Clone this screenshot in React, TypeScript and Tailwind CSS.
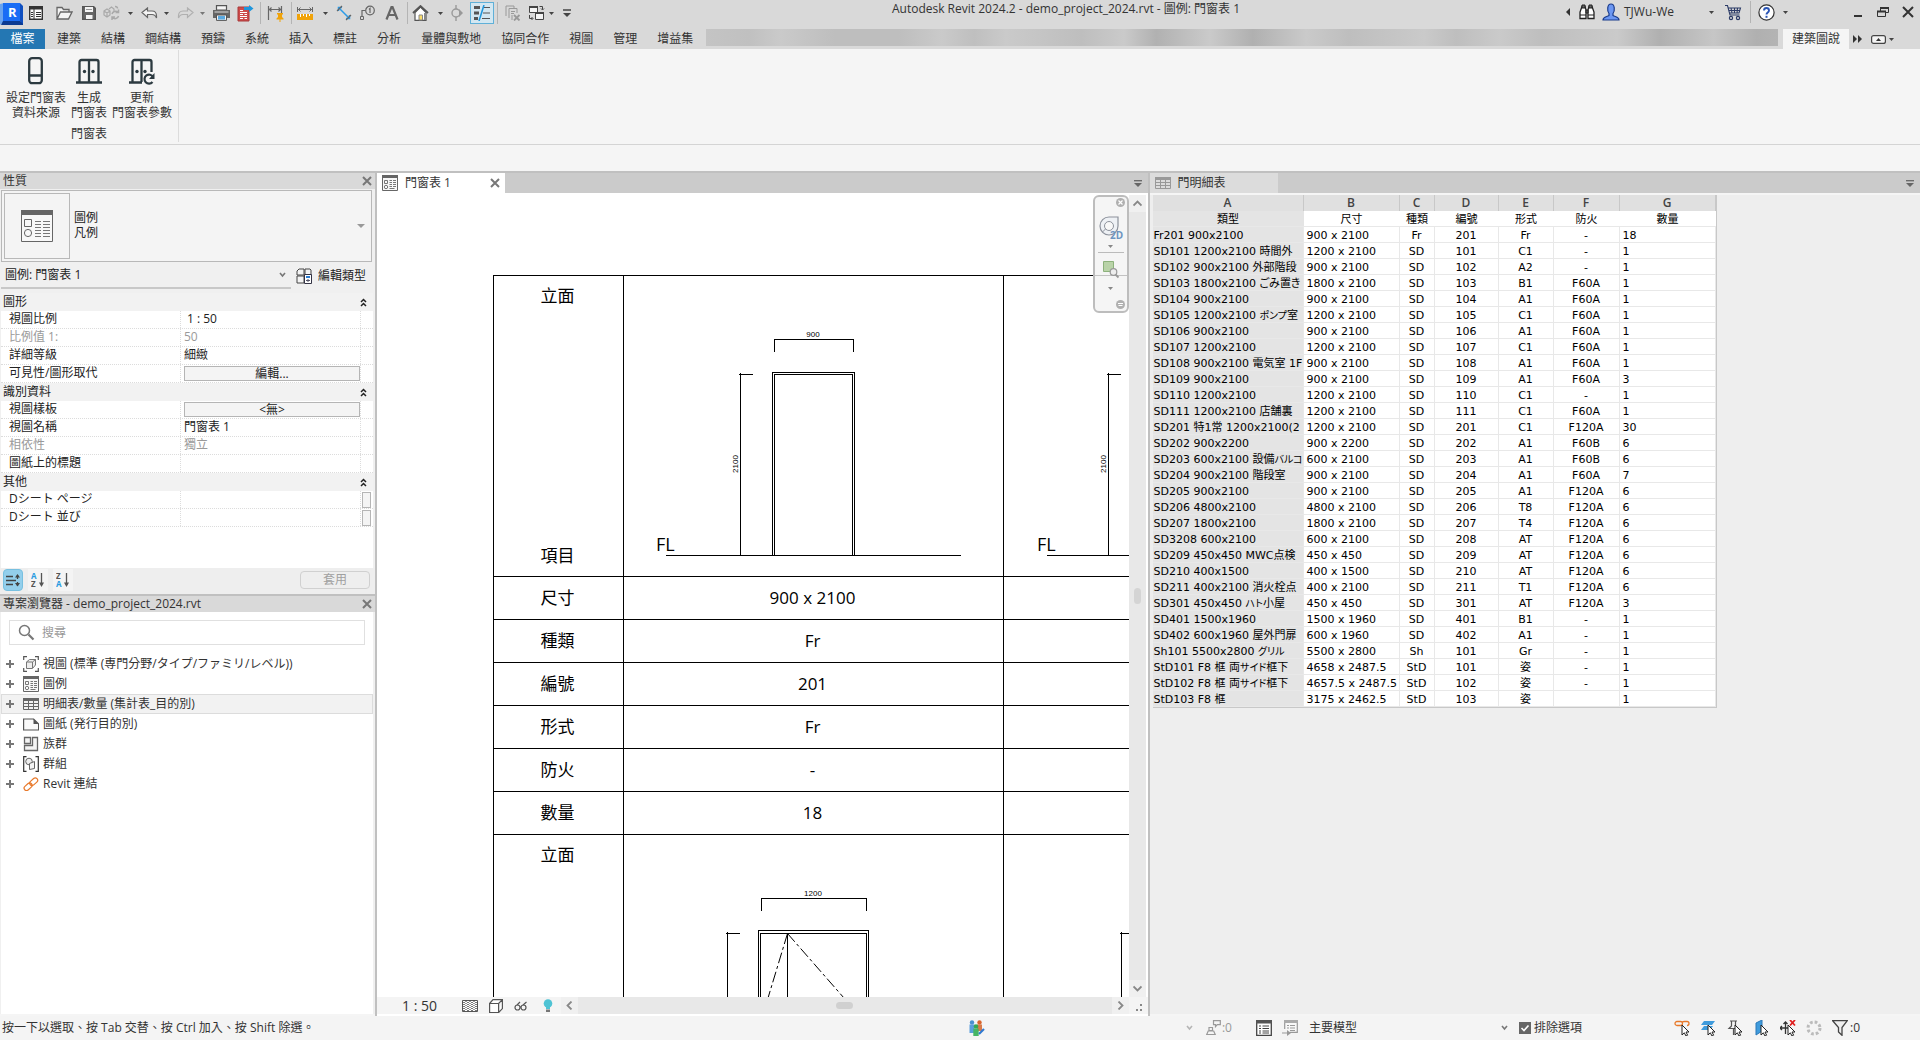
import React from "react";

type IconProps = { w?: number; h?: number; box?: string; className?: string; children: React.ReactNode };

const Icon = ({ w = 20, h = 20, box, className = "", children }: IconProps) => (
  <svg width={w} height={h} viewBox={box ?? `0 0 ${w} ${h}`} fill="none" className={`shrink-0 ${className}`} aria-hidden="true">
    {children}
  </svg>
);

const Caret = ({ className = "", label = "更多", tone = "text-[#444]" }: { className?: string; label?: string; tone?: string }) => (
  <button aria-label={label} className={`flex h-5 w-[10px] shrink-0 items-center justify-center ${tone} ${className}`}>
    <Icon w={5} h={3}><path d="M0 0h5L2.5 3z" fill="currentColor" /></Icon>
  </button>
);

const Tool = ({ label, className = "", children }: { label: string; className?: string; children: React.ReactNode }) => (
  <button aria-label={label} className={`flex h-[22px] w-5 shrink-0 items-center justify-center ${className}`}>{children}</button>
);

const Separator = ({ className = "" }: { className?: string }) => <span className={`h-[22px] w-px shrink-0 bg-[#b4b4b4] ${className}`} />;

const CloseX = ({ label }: { label: string }) => (
  <button aria-label={label} className="flex h-4 w-4 items-center justify-center text-[#777]">
    <Icon w={10} h={10}><path d="M1 1l8 8M9 1L1 9" stroke="currentColor" strokeWidth="2" /></Icon>
  </button>
);

const LegendIcon = ({ size = 16 }: { size?: number }) => (
  <Icon w={size} h={size} box="0 0 16 16">
    <path d="M.5.5h15v15H.5z" fill="#f8f8f8" stroke="#666" />
    <path d="M0 0h16v3H0z" fill="#666" />
    <path d="M2.5 5.5h3v3h-3zM7.5 5.5H10M11 5.5h3M7.5 7.5H10M11 7.5h3M7.5 9.5H10M11 9.5h3M7.5 11.5H10M11 11.5h3M7.5 13.5h5" stroke="#777" />
    <circle cx="4" cy="12" r="1.7" stroke="#777" />
  </Icon>
);

const ScheduleIcon = ({ color = "#666" }: { color?: string }) => (
  <Icon w={16} h={14}>
    <path d="M.5 1.5h15v11H.5zM.5 6.5h15M.5 9.5h15M5.5 3v9.5M10.5 3v9.5" stroke={color} />
    <path d="M0 1h16v3H0z" fill={color} />
  </Icon>
);

function TitleBar() {
  return (
    <header className="flex h-[29px] shrink-0 items-start bg-[#d9d9d9] pt-px">
      <nav aria-label="快速存取工具列" className="flex shrink-0 items-center">
        <button aria-label="Revit" className="flex h-6 w-6 shrink-0 items-center justify-start">
          <Icon w={23} h={23}>
            <path d="M0 2L4 1v19l-4 3z" fill="#6aa4ee" />
            <path d="M3 1h17v18H3z" fill="#1a6df5" />
            <path d="M3 19h17l3 1v3H1z" fill="#0b3a91" />
            <path d="M20 1l3 3v18l-3-3z" fill="#0f4fc0" />
            <text x="8" y="15" fontSize="13" fontWeight="700" fill="#fff" fontFamily="Open Sans, sans-serif">R</text>
          </Icon>
        </button>
        <Tool label="首頁" className="ml-0.5">
          <Icon w={14} h={14}>
            <path d="M.7.7h12.6v12.6H.7z" fill="#fff" stroke="#333" strokeWidth="1.4" />
            <path d="M0 0h14v3.5H0z" fill="#333" />
            <path d="M5 3v11M7 6.5h5M7 8.5h5M7 10.5h5M2 6.5h2M2 8.5h2M2 10.5h2" stroke="#333" />
          </Icon>
        </Tool>
        <Tool label="開啟" className="ml-2">
          <Icon w={17} h={14}>
            <path d="M1 13V1.5h5l1.500 2H13V6M1 13L4.500 6H16l-3.500 7z" fill="#f4f4f4" stroke="#666" strokeWidth="1.300" />
          </Icon>
        </Tool>
        <Tool label="儲存" className="ml-[5px]">
          <Icon w={14} h={14}>
            <path d="M.7.7h11l1.600 1.600v11H.7z" fill="#666" stroke="#555" strokeWidth="1.400" />
            <path d="M3 1h8v5H3zM4 9h6.500v4H4z" fill="#f4f4f4" />
            <path d="M4 3.500h6" stroke="#999" />
          </Icon>
        </Tool>
        <Tool label="同步" className="ml-0.5">
          <Icon w={17} h={16}>
            <path d="M1 6l3-2 3 2v4l-3 2-3-2zM1 6l3 2 3-2M4 8v4M6 4l2.500-2L11 4v3" stroke="#a9a9a9" strokeWidth="1.200" />
            <path d="M9 9a3.500 3.500 0 016-1.500M15.500 4.500v3h-3M15.500 11a3.500 3.500 0 01-6 1.500M9 15v-3h3M12 1.500c2 0 2.500 1 2.500 2" stroke="#a9a9a9" strokeWidth="1.500" />
          </Icon>
        </Tool>
        <Caret className="ml-1" />
        <Tool label="退回" className="ml-1">
          <Icon w={17} h={12}><path d="M1 5.500L6.500 1v3H11c3 0 4.500 2 4.500 5v2C14.500 8.500 13 7.500 11 7.500H6.500v3z" fill="#f4f4f4" stroke="#666" strokeWidth="1.200" /></Icon>
        </Tool>
        <Caret className="ml-0.5" />
        <Tool label="重做" className="ml-1">
          <Icon w={17} h={12}><path d="M16 5.500L10.500 1v3H6C3 4 1.500 6 1.500 9v2C2.500 8.500 4 7.500 6 7.500h4.500v3z" stroke="#b0b0b0" strokeWidth="1.200" /></Icon>
        </Tool>
        <Caret className="ml-0.5" tone="text-[#777]" />
        <Tool label="列印" className="ml-1">
          <Icon w={17} h={16}>
            <path d="M3.500.7h10V5h-10z" fill="#f4f4f4" stroke="#555" strokeWidth="1.200" />
            <path d="M0 5h17v8H0z" fill="#666" /><path d="M1.500 6.500h14v1h-14z" fill="#ddd" />
            <path d="M3.500 10h10v5.400h-10z" fill="#f4f4f4" stroke="#555" /><path d="M5 11h7v3.500H5z" fill="#5aa9e0" />
          </Icon>
        </Tool>
        <Tool label="匯出 PDF" className="ml-1">
          <Icon w={17} h={17}>
            <path d="M1 2h11v14H1z" fill="#cd4b4b" stroke="#a93a3a" />
            <path d="M3 7.500h7M3 9.500h3M7.500 9.500H10M3 11.500h7M3 13.500h3M7.500 13.500H10M3 5.500h3" stroke="#fff" />
            <path d="M7 2h5V0l4.500 3.500L12 7V5H7z" fill="#1e96dc" />
          </Icon>
        </Tool>
        <Separator className="ml-[5px]" />
        <Tool label="對齊標註" className="ml-[5px]">
          <Icon w={18} h={17}>
            <path d="M1.500 1v14M14.500 1v7M2 4.500h12M4.500 2.500l-2 2 2 2M11.500 2.500l2 2-2 2" stroke="#666" strokeWidth="1.200" />
            <path d="M10 8h6v1.500h-1v2.500l1.500 1.500v1H13.500V17h-1v-2.500H9.500v-1L11 12V9.500h-1z" fill="#f0a30a" />
          </Icon>
        </Tool>
        <Separator className="ml-[5px]" />
        <Tool label="測量" className="ml-[3px]">
          <Icon w={16} h={15}>
            <path d="M.5 1v5M15.500 1v5M1 3.500h14M3.500 1.500l-2 2 2 2M12.500 1.500l2 2-2 2" stroke="#666" />
            <path d="M0 8h16v6H0z" fill="#f0a30a" /><path d="M3.500 8v3M6.500 8v2M9.500 8v3M12.500 8v2" stroke="#fff" />
          </Icon>
        </Tool>
        <Caret className="ml-[5px]" />
        <Tool label="對齊線" className="ml-1">
          <Icon w={16} h={16}>
            <path d="M3 3l10 10" stroke="#2a9be8" strokeWidth="1.500" /><path d="M2.500 6V2.500H6M13.500 10v3.500H10" stroke="#2a9be8" strokeWidth="1.500" />
            <path d="M1 6l5-5M10 15l5-5" stroke="#666" strokeWidth="1.200" />
          </Icon>
        </Tool>
        <Tool label="依品類建立標籤" className="ml-[3px]">
          <Icon w={16} h={16}>
            <circle cx="11" cy="5.500" r="4.300" stroke="#666" strokeWidth="1.200" />
            <path d="M10 4.500l1-1V8M6.500 5.500H3v6" stroke="#666" strokeWidth="1.200" /><path d="M1.500 11.500h3v3h-3z" stroke="#666" />
          </Icon>
        </Tool>
        <Tool label="文字" className="ml-[5px]">
          <Icon w={14} h={14}><path d="M1.500 13.500L6.500 1h1l5 12.500M3.500 9h7" stroke="#666" strokeWidth="2.200" /></Icon>
        </Tool>
        <Separator className="ml-[5px]" />
        <Tool label="預設 3D 視圖" className="ml-0.5">
          <Icon w={17} h={16}>
            <path d="M3 7.500v7.800h11V7.500L8.500 2z" fill="#fff" stroke="#555" strokeWidth="1.200" />
            <path d="M1 8l7.500-7L16 8" stroke="#555" strokeWidth="1.800" /><path d="M7 10h3.500v5H7z" fill="#f8dc6a" stroke="#888" />
            <path d="M12 8v7h2V8z" fill="#888" />
          </Icon>
        </Tool>
        <Caret className="ml-[5px]" />
        <Tool label="剖面" className="ml-0.5">
          <Icon w={14} h={16}><circle cx="6" cy="8" r="4" stroke="#999" strokeWidth="1.400" /><path d="M6 0v4M6 12v4" stroke="#999" strokeWidth="1.400" /><path d="M9 4l4 4-4 4z" fill="#999" /></Icon>
        </Tool>
        <button aria-label="細線" aria-pressed="true" className="ml-[3px] flex h-[22px] w-6 shrink-0 items-center justify-center border border-[#5fb0d8] bg-[#d3e7f1]">
          <Icon w={18} h={16}>
            <path d="M1 2.500h6M1 8h5M1 13.500h4" stroke="#555" strokeWidth="3" /><path d="M11 2.500h6M10 8h7M9 13.500h8" stroke="#555" />
            <path d="M11 0L6 16" stroke="#1e96dc" strokeWidth="1.500" />
          </Icon>
        </button>
        <Separator className="ml-[3px]" />
        <Tool label="關閉非作用中視圖" className="ml-[5px]">
          <Icon w={16} h={16}><path d="M1 11V1h8v2M4 13V3.500h8V8M6 6.500h4M6 8.500h3M7 15V10" stroke="#999" /><path d="M9 10l5.500 5.500M14.500 10L9 15.500" stroke="#999" strokeWidth="1.800" /></Icon>
        </Tool>
        <Tool label="切換視窗" className="ml-[3px]">
          <Icon w={17} h={16}>
            <path d="M1.500 1.500h8v6h-8zM7.500 7.500h8v7h-8z" fill="#f4f4f4" stroke="#444" /><path d="M1 1h9v2H1zM7 7h9v2H7z" fill="#444" />
            <path d="M11.500 1.500h3v3M13 3.500l1.500 1.500L16 3.500M1.500 10v3.500h3M3.500 12l1.500 1.500L3.500 15" stroke="#444" />
          </Icon>
        </Tool>
        <Caret />
        <Tool label="自訂快速存取工具列" className="ml-px">
          <Icon w={8} h={8}><path d="M0 1h8" stroke="#444" strokeWidth="1.500" /><path d="M0 4h8L4 8z" fill="#444" /></Icon>
        </Tool>
      </nav>
      <h1 className="min-w-0 flex-1 truncate pr-2 text-center text-xs leading-4 text-[#333]">Autodesk Revit 2024.2 - demo_project_2024.rvt - 圖例: 門窗表 1</h1>
      <div className="flex h-[22px] shrink-0 items-center pr-0.5 text-xs text-[#333]">
        <button aria-label="收合" className="flex w-[10px] justify-center"><Icon w={4} h={8}><path d="M4 0v8L0 4z" fill="#333" /></Icon></button>
        <Tool label="搜尋" className="ml-1">
          <Icon w={16} h={16}>
            <path d="M1 14.500V8l2-5.500h3L7 6v8.500zM15 14.500V8l-2-5.500h-3L9 6v8.500z" fill="#fff" stroke="#222" strokeWidth="1.300" />
            <path d="M3 1h3v3H3zM10 1h3v3h-3zM7 6h2v3H7z" fill="#666" stroke="#222" /><path d="M1 11h6M9 11h6" stroke="#222" />
          </Icon>
        </Tool>
        <button className="ml-1 flex items-center">
          <Icon w={20} h={18}>
            <path d="M2 17c0-3 3-3 6-4.500v-2C6 8 6 1 10 1s4 7 2 9.500v2c3 1.500 6 1.500 6 4.500z" fill="#6c97f2" stroke="#1b3c8c" strokeWidth="1.200" />
          </Icon>
          <span className="ml-[3px] w-20 text-left">TJWu-We</span>
        </button>
        <Caret className="ml-0.5" />
        <Tool label="Autodesk 商店" className="ml-[7px]">
          <Icon w={18} h={17}>
            <path d="M1 1.500h2.500L6 11h9.500M4 4h12.500l-1.500 5H5.500M7 4l1 5M10.500 4v5M13.500 4L13 9M4.500 6.500H16" stroke="#2b3a66" strokeWidth="1.100" />
            <circle cx="7" cy="14" r="1.600" stroke="#2b3a66" strokeWidth="1.200" /><circle cx="14" cy="14" r="1.600" stroke="#2b3a66" strokeWidth="1.200" />
          </Icon>
        </Tool>
        <Separator className="ml-[7px]" />
        <Tool label="說明" className="ml-[5px]">
          <Icon w={17} h={17}>
            <circle cx="8.500" cy="8.500" r="7.600" fill="#fff" stroke="#333" strokeWidth="1.200" />
            <path d="M6 6.500c0-3.300 5-3.300 5 0 0 2-2.500 2-2.500 4" stroke="#2a55b5" strokeWidth="1.900" /><path d="M7.500 11.800h2v2h-2z" fill="#2a55b5" />
          </Icon>
        </Tool>
        <Caret className="ml-1" />
        <button aria-label="最小化" className="ml-[58px] flex h-5 w-5 items-center justify-center"><Icon w={10} h={10}><path d="M1 9h8" stroke="#333" strokeWidth="2" /></Icon></button>
        <button aria-label="還原" className="ml-[5px] flex h-5 w-5 items-center justify-center">
          <Icon w={12} h={12}><path d="M.5 5.500h8v5h-8zM3.500 5V1.500h8v5H9" stroke="#333" /><path d="M0 4.500h9v2H0zM3 1h9v2H3z" fill="#333" /></Icon>
        </button>
        <button aria-label="關閉" className="ml-[5px] flex h-5 w-5 items-center justify-center"><Icon w={12} h={12}><path d="M1 1l10 10M11 1L1 11" stroke="#333" strokeWidth="2" /></Icon></button>
      </div>
    </header>
  );
}

const ribbonTabs = ["建築", "結構", "鋼結構", "預鑄", "系統", "插入", "標註", "分析", "量體與敷地", "協同合作", "視圖", "管理", "增益集"];

function RibbonTabs() {
  return (
    <nav aria-label="功能區" className="flex h-5 shrink-0 items-start bg-[#d9d9d9] text-xs leading-5 text-[#333]">
      <button className="h-5 w-[45px] shrink-0 bg-[#2477b3] text-white">檔案</button>
      <div className="ml-0.5 flex shrink-0">
        {ribbonTabs.map((t) => <button key={t} className="px-[10px]">{t}</button>)}
      </div>
      <div className="mr-[5px] ml-[3px] h-[17px] flex-1 bg-[linear-gradient(90deg,#c4c4c4_0%,#c0c0c0_4%,#cacaca_7%,#bebebe_12%,#bebebe_18%,#cacaca_22%,#bfbfbf_25%,#cacaca_28%,#bebebe_35%,#cacaca_39%,#b1b1b1_42%,#cacaca_47%,#b0b0b0_51%,#cacaca_56%,#bebebe_60%,#cacaca_67%,#bebebe_70%,#cacaca_74%,#bebebe_78%,#cacaca_85%,#b0b0b0_89%,#c6c6c6_94%,#b0b0b0_98%,#b4b4b4_100%)]" />
      <button className="h-5 w-[66px] shrink-0 bg-[#f5f5f5]">建築圖說</button>
      <button aria-label="更多頁籤" className="ml-[3px] flex h-5 w-[10px] items-center justify-center"><Icon w={9} h={8}><path d="M0 0l4 4-4 4zM5 0l4 4-4 4z" fill="#333" /></Icon></button>
      <button aria-label="最小化功能區" className="ml-2 flex h-5 w-4 items-center justify-center">
        <Icon w={15} h={9}><rect x=".6" y=".6" width="13.800" height="7.800" rx="2" fill="#f4f4f4" stroke="#444" strokeWidth="1.200" /><path d="M5 6h5L7.500 3z" fill="#333" /></Icon>
      </button>
      <Caret className="mr-6" />
    </nav>
  );
}

const RibbonButton = ({ lines, children }: { lines: [string, string]; children: React.ReactNode }) => (
  <button className="flex flex-col items-center">
    <span className="mb-1 flex h-[30px] items-center">{children}</span>
    <span>{lines[0]}</span>
    <span>{lines[1]}</span>
  </button>
);

function Ribbon() {
  return (
    <section className="h-[122px] shrink-0 text-xs leading-[15px] text-[#333]">
      <div className="flex h-24 border-b border-[#d4d4d4]">
        <div className="mt-px mb-0.5 flex flex-col items-center border-r border-[#dcdcdc] px-1.5 pt-1.5">
          <div className="flex gap-[5px]">
            <RibbonButton lines={["設定門窗表", "資料來源"]}>
              <Icon w={16} h={28}><rect x="1.200" y="1.200" width="12.600" height="25" rx="3" stroke="#2c3a40" strokeWidth="2.300" /><path d="M2 18.500h12" stroke="#2c3a40" strokeWidth="2.500" /></Icon>
            </RibbonButton>
            <RibbonButton lines={["生成", "門窗表"]}>
              <Icon w={26} h={28}><path d="M3.500 25V5a2 2 0 012-2h15a2 2 0 012 2v20M13 3v22M0 25.500h26" stroke="#2c3a40" strokeWidth="2.300" /><circle cx="8.500" cy="14.500" r="1.700" fill="#2c3a40" /><circle cx="17" cy="14.500" r="1.700" fill="#2c3a40" /></Icon>
            </RibbonButton>
            <RibbonButton lines={["更新", "門窗表參數"]}>
              <Icon w={28} h={28}>
                <path d="M4.500 25V5a2 2 0 012-2h15a2 2 0 012 2v10M13.500 3v22M1 25.500h13" stroke="#2c3a40" strokeWidth="2.300" />
                <circle cx="9" cy="14.500" r="1.700" fill="#2c3a40" /><circle cx="17" cy="14.500" r="1.700" fill="#2c3a40" />
                <path d="M24.500 25a4.500 4.500 0 11.500-5" stroke="#2c3a40" strokeWidth="2.200" /><path d="M26.500 16v6h-5.500z" fill="#2c3a40" />
              </Icon>
            </RibbonButton>
          </div>
          <span className="mt-1.5">門窗表</span>
        </div>
      </div>
    </section>
  );
}

const PanelTitle = ({ children, close }: { children: React.ReactNode; close: string }) => (
  <div className="flex h-4 shrink-0 items-center justify-between bg-[#d9d9d9] pl-[3px] text-xs leading-4 text-[#333]">
    <h2>{children}</h2>
    <CloseX label={close} />
  </div>
);

const SectionHead = ({ children }: { children: React.ReactNode }) => (
  <div className="flex h-[18px] items-center justify-between bg-[#f2f2f2] pr-1.5 pl-0.5 leading-4">
    <h3>{children}</h3>
    <button aria-label="收合"><Icon w={7} h={9}><path d="M1 4l2.500-2.500L6 4M1 8l2.500-2.500L6 8" stroke="#222" strokeWidth="1.500" /></Icon></button>
  </div>
);

const Row = ({ label, dim, children, extra }: { label: string; dim?: boolean; children?: React.ReactNode; extra?: boolean }) => (
  <div className={`grid h-[18px] grid-cols-[180px_1fr_12px] border-b border-dotted border-[#dcdcdc] leading-4 ${dim ? "text-[#9a9a9a]" : ""}`}>
    <span className="border-r border-dotted border-[#dcdcdc] pl-2">{label}</span>
    <span className="border-r border-dotted border-[#dcdcdc] pl-[3px]">{children}</span>
    {extra ? <button aria-label={`${label} 選項`} className="mt-px ml-px h-4 w-[9px] border border-[#b5b5b5] bg-[#f4f4f4]" /> : <span />}
  </div>
);

const CellButton = ({ children }: { children: React.ReactNode }) => (
  <button className="mt-px block h-[15px] w-full border border-[#b5b5b5] bg-[#f4f4f4] leading-[13px]">{children}</button>
);

const Chevron = ({ className = "", color = "#777" }: { className?: string; color?: string }) => (
  <Icon w={7} h={6} className={className}><path d="M1 1l2.500 3L6 1" stroke={color} strokeWidth="1.600" /></Icon>
);

function Properties() {
  return (
    <section className="flex shrink-0 flex-col text-xs text-[#222]">
      <PanelTitle close="關閉性質">性質</PanelTitle>
      <button className="mx-px mt-px mr-[3px] flex h-[72px] items-center border border-[#b8b8b8] bg-[#f4f4f4] pl-0.5 text-left">
        <span className="flex h-[66px] w-[66px] items-center justify-center border border-[#b8b8b8]">
          <Icon w={32} h={32}>
            <path d="M.5.5h31v31H.5z" fill="#f8f8f8" stroke="#666" /><path d="M0 0h32v5H0z" fill="#666" />
            <path d="M3.500 9.500h7v7h-7z" stroke="#666" /><circle cx="7" cy="23" r="3.600" stroke="#666" />
            <path d="M14 11.500h6M22 11.500h7M14 14.500h6M22 14.500h7M14 17.500h6M22 17.500h7M14 20.500h6M22 20.500h7M14 23.500h6M22 23.500h7M14 26.500h6M22 26.500h7" stroke="#777" />
          </Icon>
        </span>
        <span className="ml-1 flex-1 pb-0.5 leading-[15px]">圖例<br />凡例</span>
        <Icon w={8} h={4} className="mr-[6px]"><path d="M0 0h8L4 4z" fill="#999" /></Icon>
      </button>
      <div className="flex h-[31px] items-start">
        <label className="relative ml-px flex h-[27px] w-[290px] items-center border-b-2 border-[#c8c8c8]">
          <select aria-label="類型篩選" className="w-full appearance-none bg-transparent pl-1">
            <option>圖例: 門窗表 1</option>
          </select>
          <Chevron className="pointer-events-none absolute right-[5px]" />
        </label>
        <button className="ml-[5px] flex h-[27px] items-center gap-1.5">
          <Icon w={16} h={16}>
            <path d="M1 3l2-2h5v6H1zM9 1h5l1 1v5H9zM1 8h7v7H1z" fill="#f4f4f4" stroke="#444" />
            <path d="M8.500 6.500h7v9h-7z" fill="#fff" stroke="#334" /><path d="M10 8h4v2h-4z" fill="#2a7bd0" /><path d="M10 12.500h4M12 11v3" stroke="#556" />
          </Icon>
          編輯類型
        </button>
      </div>
      <div className="mr-0.5 ml-px h-[275px] bg-white">
        <SectionHead>圖形</SectionHead>
        <Row label="視圖比例"><span className="pl-[3px]">1 : 50</span></Row>
        <Row label="比例值 1:" dim>50</Row>
        <Row label="詳細等級">細緻</Row>
        <Row label="可見性/圖形取代"><CellButton>編輯...</CellButton></Row>
        <SectionHead>識別資料</SectionHead>
        <Row label="視圖樣板"><CellButton>&lt;無&gt;</CellButton></Row>
        <Row label="視圖名稱">門窗表 1</Row>
        <Row label="相依性" dim>獨立</Row>
        <Row label="圖紙上的標題" />
        <SectionHead>其他</SectionHead>
        <Row label="Dシート ページ" extra />
        <Row label="Dシート 並び" extra />
      </div>
      <div className="flex h-[26px] items-center gap-[5px] bg-[#eee] pr-[5px] pb-0.5 pl-[3px]">
        <button aria-label="依群組排序" className="flex h-[22px] w-5 items-center justify-center rounded-sm border border-[#78c0e0] bg-[#93cfec]">
          <Icon w={14} h={14}><path d="M0 3.500h7M0 7.500h10M0 11.500h7M11.500 2v4M11.500 9v4" stroke="#444" strokeWidth="1.300" /><path d="M9 4.500L11.500 1 14 4.500zM9 10l2.500 3.500L14 10z" fill="#444" /></Icon>
        </button>
        {["AZ", "ZA"].map((s) => (
          <button key={s} aria-label={`排序 ${s}`} className="flex h-[22px] w-5 items-center justify-center bg-[#f4f4f4]">
            <Icon w={14} h={22}>
              <text x="0" y="10" fontSize="8" fontWeight="700" fill={s[0] === "A" ? "#2a9be0" : "#555"}>{s[0]}</text>
              <text x="0" y="18" fontSize="8" fontWeight="700" fill={s[1] === "A" ? "#2a9be0" : "#555"}>{s[1]}</text>
              <path d="M10.500 4v12" stroke="#555" strokeWidth="1.300" /><path d="M8 13.500h5L10.500 18z" fill="#555" />
            </Icon>
          </button>
        ))}
        <button disabled className="ml-auto h-[18px] w-[70px] rounded-sm border border-[#d0d0d0] leading-4 text-[#a0a0a0]">套用</button>
      </div>
    </section>
  );
}

const tree: { label: string; icon: React.ReactNode; active?: boolean }[] = [
  { label: "視圖 (標準 (専門分野/タイプ/ファミリ/レベル))", icon: <Icon w={16} h={16}><path d="M4 .7H.7V4M12 .7h3.300V4M4 15.300H.7V12M12 15.300h3.300V12" stroke="#555" strokeWidth="1.200" /><path d="M3.500 6l3-2.500h6V9l-3 3.500h-6zM3.500 6h6v6M9.500 6l3-2.500" fill="#eee" stroke="#777" /></Icon> },
  { label: "圖例", icon: <LegendIcon /> },
  { label: "明細表/數量 (集計表_目的別)", icon: <ScheduleIcon />, active: true },
  { label: "圖紙 (発行目的別)", icon: <Icon w={16} h={13}><path d="M.6 1h10l5 5v6H.6z" fill="#fafafa" stroke="#555" strokeWidth="1.200" /><path d="M10.500 1v5h5z" fill="#555" /></Icon> },
  { label: "族群", icon: <Icon w={16} h={16}><path d="M1.500 1.500h6v6h-6zM9.500 1.500h5v13h-13v-5h8z" fill="#f4f4f4" stroke="#666" strokeWidth="1.300" /></Icon> },
  { label: "群組", icon: <Icon w={16} h={16}><path d="M3.500.7H.7v14.600h2.800M12.500.7h2.800v14.600h-2.800" stroke="#333" strokeWidth="1.200" /><circle cx="6" cy="5.500" r="3.300" fill="#eee" stroke="#666" /><path d="M6.500 7.500l5-2v7l-5 1z" fill="#f4f4f4" stroke="#666" /></Icon> },
  { label: "Revit 連結", icon: <Icon w={16} h={14}><g transform="rotate(-42 8 7)" stroke="#e8792b" strokeWidth="1.200"><rect x="-.5" y="4.700" width="9" height="4.800" rx="2.400" /><rect x="7" y="4.700" width="9" height="4.800" rx="2.400" /></g></Icon> },
];

function ProjectBrowser() {
  return (
    <section className="flex min-h-0 flex-1 flex-col border-t-2 border-[#c0c0c0] text-xs text-[#333]">
      <PanelTitle close="關閉專案瀏覽器">專案瀏覽器 - demo_project_2024.rvt</PanelTitle>
      <div className="mr-0.5 ml-px flex-1 bg-white pt-2">
        <label className="mr-2 ml-2 flex h-[25px] items-center border border-[#e0e0e0] pl-2">
          <Icon w={17} h={17}><circle cx="6.500" cy="6.500" r="5" stroke="#777" strokeWidth="1.500" /><path d="M10.500 10.500l5 5" stroke="#777" strokeWidth="2.200" /></Icon>
          <input type="text" aria-label="搜尋" placeholder="搜尋" className="ml-[7px] min-w-0 flex-1 bg-transparent outline-none placeholder:text-[#999]" />
        </label>
        <ul className="mt-[9px]">
          {tree.map((n) => (
            <li key={n.label} className={`flex h-5 items-center border pl-1 ${n.active ? "border-[#dcdcdc] bg-[#f2f2f2]" : "border-transparent"}`}>
              <button aria-label={`展開 ${n.label}`} className="text-[#777]"><Icon w={8} h={8}><path d="M0 4h8M4 0v8" stroke="currentColor" strokeWidth="2" /></Icon></button>
              <span className="ml-[9px] flex w-4 items-center justify-center">{n.icon}</span>
              <span className="ml-1">{n.label}</span>
            </li>
          ))}
        </ul>
      </div>
    </section>
  );
}

const dimText = "[font-family:'Liberation_Sans_Narrow','Liberation_Sans',sans-serif] text-[8px]";

/* Coordinates inside an elevation are relative to the outer corner of its cell border. */
const Elevation = ({ children }: { children: React.ReactNode }) => (
  <svg width="379" height="300" viewBox="1 1 379 300" className="block" stroke="#000" fill="none">{children}</svg>
);

const DoorElevation = () => (
  <Elevation>
    <path shapeRendering="crispEdges" d="M43 280.500H338M117.500 98V280M116 99.500h14M151.500 77V64.500h79V77M151 64.500h80M149.500 280V97.500h82V280M151.500 280V99.500h78V280" />
    <g fill="#000" stroke="none">
      <text x="33" y="276" className="text-lg">FL</text>
      <text x="190" y="62" textAnchor="middle" className={dimText}>900</text>
      <text transform="translate(115 189) rotate(-90)" textAnchor="middle" className={dimText}>2100</text>
    </g>
  </Elevation>
);

const NextElevation = () => (
  <Elevation>
    <path shapeRendering="crispEdges" d="M44 280.500H338M105.500 98V280M104 99.500h14" />
    <g fill="#000" stroke="none">
      <text x="34" y="276" className="text-lg">FL</text>
      <text transform="translate(103 189) rotate(-90)" textAnchor="middle" className={dimText}>2100</text>
    </g>
  </Elevation>
);

const DoubleDoorElevation = () => (
  <Elevation>
    <path shapeRendering="crispEdges" d="M138.500 77V64.500h105V77M104.500 98V280M103 99.500h14M135.500 280V96.500h110V280M137.500 280V99.500h106V280M164.500 99.500V280" />
    <path d="M164.500 99.500L145 164M164.500 99.500L221 164" strokeDasharray="11 3 3 3" />
    <text x="190" y="62" textAnchor="middle" fill="#000" stroke="none" className={dimText}>1200</text>
  </Elevation>
);

const SideElevation = () => (
  <Elevation>
    <path shapeRendering="crispEdges" d="M118.500 98V280M117 99.500h14" />
  </Elevation>
);

const legendRows = [["尺寸", "900 x 2100"], ["種類", "Fr"], ["編號", "201"], ["形式", "Fr"], ["防火", "-"], ["數量", "18"]];
const cell = "border border-black p-0 align-top";

function LegendSheet() {
  return (
    <table className="mt-[82px] ml-[116px] w-[890px] table-fixed border-collapse text-[17px] leading-6 text-black">
      <colgroup><col className="w-[130px]" /><col className="w-[380px]" /><col className="w-[380px]" /></colgroup>
      <tbody className="text-center">
        <tr className="h-[301px]">
          <th className={`${cell} font-normal`}><div className="flex h-[300px] flex-col justify-between py-2 pr-0.5"><span>立面</span><span>項目</span></div></th>
          <td className={cell}><DoorElevation /></td>
          <td className={cell}><NextElevation /></td>
        </tr>
        {legendRows.map(([k, v]) => (
          <tr key={k} className="h-[43px]">
            <th className="border border-black p-0 pr-0.5 font-normal">{k}</th>
            <td className="border border-black p-0 pr-0.5">{v}</td>
            <td className="border border-black p-0" />
          </tr>
        ))}
        <tr className="h-[301px]">
          <th className={`${cell} font-normal`}><div className="py-2 pr-0.5">立面</div></th>
          <td className={cell}><DoubleDoorElevation /></td>
          <td className={cell}><SideElevation /></td>
        </tr>
      </tbody>
    </table>
  );
}

const ViewNavigator = () => (
  <div className="absolute top-0.5 right-0 flex h-[118px] w-9 flex-col items-center rounded-md border-2 border-[#bdbdbd] bg-[#f2f2f2]/80 text-[#888]">
    <button aria-label="關閉導覽列" className="mt-px mr-0.5 self-end"><Icon w={9} h={9}><circle cx="4.500" cy="4.500" r="4.500" fill="#b0b0b0" /><path d="M2.500 2.500l4 4M6.500 2.500l-4 4" stroke="#fff" strokeWidth="1.200" /></Icon></button>
    <button aria-label="2D 導覽輪" className="mt-2">
      <Icon w={26} h={26}>
        <path d="M11 2h9v9a9 9 0 11-9-9z" fill="#eef1f5" stroke="#8d929c" strokeWidth="1.200" /><circle cx="11" cy="11" r="4.500" fill="#f8f8f8" stroke="#8d929c" /><path d="M4.500 17l3-3" stroke="#8d929c" />
        <text x="12" y="24" fontSize="10" fontWeight="700" fill="#6d94c0" fontFamily="Open Sans, sans-serif">2D</text>
      </Icon>
    </button>
    <Icon w={5} h={3} className="mt-1"><path d="M0 0h5L2.500 3z" fill="#888" /></Icon>
    <span className="mt-1 h-px w-[26px] bg-[#bbb]" />
    <button aria-label="縮放" className="mt-2">
      <Icon w={18} h={18}><path d="M1.500.5h10v10h-10z" fill="#b9d3a8" stroke="#8db27c" /><circle cx="11.500" cy="11" r="3.300" fill="#eee" stroke="#999" strokeWidth="1.200" /><path d="M13.500 13.500l3 3" stroke="#999" strokeWidth="1.800" /></Icon>
    </button>
    <Icon w={5} h={3} className="mt-2"><path d="M0 0h5L2.500 3z" fill="#888" /></Icon>
    <button aria-label="自訂" className="mt-auto mr-0.5 mb-0.5 self-end"><Icon w={9} h={9}><circle cx="4.500" cy="4.500" r="4.500" fill="#b0b0b0" /><path d="M2 3.500h5M2.500 5.500h4" stroke="#fff" /></Icon></button>
  </div>
);

const ScrollArrow = ({ label, d, className = "" }: { label: string; d: string; className?: string }) => (
  <button aria-label={label} className={`flex h-[17px] w-[17px] shrink-0 items-center justify-center bg-[#f0f0f0] ${className}`}>
    <Icon w={9} h={9}><path d={d} stroke="#888" strokeWidth="1.800" /></Icon>
  </button>
);

const TabsMenu = () => (
  <button aria-label="頁籤清單" className="mr-0.5 ml-auto flex h-5 w-4 items-center justify-center"><Icon w={8} h={7}><path d="M0 .7h8" stroke="#666" strokeWidth="1.300" /><path d="M0 3h8L4 7z" fill="#666" /></Icon></button>
);

function LegendView() {
  return (
    <section className="flex min-w-0 flex-1 flex-col bg-white pb-0.5">
      <div className="flex h-5 shrink-0 bg-[#cbcbcb] text-xs text-[#333]">
        <div className="flex w-32 items-center bg-white pr-0.5 pl-[5px]">
          <LegendIcon /><span className="ml-[7px] flex-1">門窗表 1</span><CloseX label="關閉門窗表 1" />
        </div>
        <TabsMenu />
      </div>
      <div className="flex min-h-0 flex-1 pr-0.5">
        <div className="relative min-w-0 flex-1 overflow-hidden">
          <LegendSheet />
          <ViewNavigator />
        </div>
        <div className="mt-0.5 flex w-[17px] shrink-0 flex-col items-center bg-[#e8e8e8]">
          <ScrollArrow label="向上捲動" d="M.5 6.500l4-4 4 4" />
          <span className="my-auto h-4 w-[7px] rounded-sm bg-[#d4d4d4]" />
          <ScrollArrow label="向下捲動" d="M.5 2.500l4 4 4-4" />
        </div>
      </div>
      <div className="flex h-[17px] shrink-0 bg-[#f4f4f4] pr-0.5 text-xs leading-4 text-[#333]">
        <div className="flex w-[184px] shrink-0 items-center pl-[25px]">
          <button className="w-[60px] text-left text-sm leading-4">1 : 50</button>
          <button aria-label="詳細等級"><Icon w={16} h={12}><path d="M.5.5h15v11H.5z" fill="#fff" stroke="#555" /><path d="M1 2.500h14M1 4.500h14M1 6.500h14M1 8.500h14M1 10.500h14" stroke="#777" strokeDasharray="2 2" /><path d="M1 1.500h14M1 3.500h14M1 5.500h14M1 7.500h14M1 9.500h14" stroke="#999" strokeDasharray="2 2" strokeDashoffset="2" /></Icon></button>
          <button aria-label="視覺型式" className="ml-[11px]"><Icon w={14} h={14}><path d="M.6 4.500h9v9h-9zM.6 4.500L4 .6h9.400l-3.800 3.900M13.400.6v9l-3.800 3.900" fill="#fff" stroke="#555" strokeWidth="1.200" /></Icon></button>
          <button aria-label="裁剪視圖" className="ml-[11px]"><Icon w={14} h={10}><circle cx="3.500" cy="6.500" r="2.500" stroke="#555" strokeWidth="1.200" /><circle cx="9.500" cy="6.500" r="2.500" stroke="#555" strokeWidth="1.200" /><path d="M3 4L6 1M9 4l3.500-3M6 6h1" stroke="#555" strokeWidth="1.200" /></Icon></button>
          <button aria-label="顯示隱藏元素" className="ml-[15px]"><Icon w={10} h={14}><circle cx="5" cy="4.500" r="4.300" fill="#4fc3d4" /><path d="M3 8h4v2H3z" fill="#4fc3d4" /><path d="M3 10.500h4V13H3z" fill="#777" /></Icon></button>
        </div>
        <ScrollArrow label="向左捲動" d="M6.500.5l-4 4 4 4" />
        <div className="flex flex-1 items-center justify-center bg-[#e8e8e8]"><span className="h-[7px] w-[17px] rounded-sm bg-[#d0d0d0]" /></div>
        <ScrollArrow label="向右捲動" d="M2.500.5l4 4-4 4" />
        <span className="flex w-[17px] items-center justify-center pt-1 pl-0.5"><Icon w={8} h={8}><path d="M6 0h2v2H6zM2 5h2v2H2zM6 5h2v2H6z" fill="#888" /></Icon></span>
      </div>
    </section>
  );
}

const schedule = `Fr201 900x2100|900 x 2100|Fr|201|Fr|-|18
SD101 1200x2100 時間外|1200 x 2100|SD|101|C1|-|1
SD102 900x2100 外部階段|900 x 2100|SD|102|A2|-|1
SD103 1800x2100 ごみ置き|1800 x 2100|SD|103|B1|F60A|1
SD104 900x2100|900 x 2100|SD|104|A1|F60A|1
SD105 1200x2100 ポンプ室|1200 x 2100|SD|105|C1|F60A|1
SD106 900x2100|900 x 2100|SD|106|A1|F60A|1
SD107 1200x2100|1200 x 2100|SD|107|C1|F60A|1
SD108 900x2100 電気室 1F|900 x 2100|SD|108|A1|F60A|1
SD109 900x2100|900 x 2100|SD|109|A1|F60A|3
SD110 1200x2100|1200 x 2100|SD|110|C1|-|1
SD111 1200x2100 店舗裏|1200 x 2100|SD|111|C1|F60A|1
SD201 特1常 1200x2100(2|1200 x 2100|SD|201|C1|F120A|30
SD202 900x2200|900 x 2200|SD|202|A1|F60B|6
SD203 600x2100 設備バルコ|600 x 2100|SD|203|A1|F60B|6
SD204 900x2100 階段室|900 x 2100|SD|204|A1|F60A|7
SD205 900x2100|900 x 2100|SD|205|A1|F120A|6
SD206 4800x2100|4800 x 2100|SD|206|T8|F120A|6
SD207 1800x2100|1800 x 2100|SD|207|T4|F120A|6
SD3208 600x2100|600 x 2100|SD|208|AT|F120A|6
SD209 450x450 MWC点検|450 x 450|SD|209|AT|F120A|6
SD210 400x1500|400 x 1500|SD|210|AT|F120A|6
SD211 400x2100 消火栓点|400 x 2100|SD|211|T1|F120A|6
SD301 450x450 ハト小屋|450 x 450|SD|301|AT|F120A|3
SD401 1500x1960|1500 x 1960|SD|401|B1|-|1
SD402 600x1960 屋外門扉|600 x 1960|SD|402|A1|-|1
Sh101 5500x2800 グリル|5500 x 2800|Sh|101|Gr|-|1
StD101 F8 框 両サイド框下|4658 x 2487.5|StD|101|姿|-|1
StD102 F8 框 両サイド框下|4657.5 x 2487.5|StD|102|姿|-|1
StD103 F8 框|3175 x 2462.5|StD|103|姿||1`.split("\n").map((r) => r.split("|"));

const letters = ["A", "B", "C", "D", "E", "F", "G"];
const headings = ["類型", "尺寸", "種類", "編號", "形式", "防火", "數量"];
const columnAlign = [
  "bg-[#e4e4e4] pl-px text-left",
  "bg-white pl-[3px] text-left",
  "bg-white text-center",
  "bg-white text-center",
  "bg-white text-center",
  "bg-white text-center",
  "bg-white pl-[3px] text-left",
];

/* Katakana runs are set one size smaller so that long type names stay inside column A. */
const withSmallKana = (s: string) =>
  s.split(/([ァ-ヶー]+)/).map((part, i) => (i % 2 ? <span key={i} className="text-[10px] leading-none">{part}</span> : part));

function ScheduleView() {
  return (
    <section className="mb-0.5 flex min-w-0 flex-1 flex-col bg-[#eee]">
      <div className="flex h-5 shrink-0 bg-[#cbcbcb] text-xs text-[#333]">
        <div className="flex w-32 items-center bg-[#dcdcdc] pl-[5px]"><ScheduleIcon color="#999" /><span className="ml-[7px]">門明細表</span></div>
        <TabsMenu />
      </div>
      <div className="flex-1 border-t-2 border-[#f5f5f5] pl-[3px]">
        <table className="w-[563px] table-fixed border-separate border-spacing-0 border-r border-b border-[#c8c8c8] [font-family:'DejaVu_Sans','Noto_Sans_CJK_JP',sans-serif] text-[11px] leading-[13px] text-black [font-feature-settings:'palt']">
          <colgroup>
            <col className="w-[151px]" /><col className="w-24" /><col className="w-[35px]" /><col className="w-16" /><col className="w-[55px]" /><col className="w-[66px]" /><col className="w-24" />
          </colgroup>
          <thead>
            <tr className="h-4 bg-[#e0e0e0] [font-family:'Open_Sans',sans-serif] text-xs text-[#444]">
              {letters.map((l) => <th key={l} scope="col" className="border-r border-[#c8c8c8] p-0 leading-4 font-semibold">{l}</th>)}
            </tr>
            <tr className="h-4">
              {headings.map((h, i) => <th key={h} scope="col" className={`border-b border-[#e8e8e8] p-0 pt-0.5 font-normal ${i === 0 ? "bg-[#e4e4e4]" : "bg-white"}`}>{h}</th>)}
            </tr>
          </thead>
          <tbody>
            {schedule.map((r) => (
              <tr key={r[0]} className="h-4">
                {r.map((c, i) => <td key={i} className={`h-4 overflow-hidden border-r border-b border-[#e8e8e8] pt-0.5 pr-0 pb-0 whitespace-nowrap ${columnAlign[i]}`}>{withSmallKana(c)}</td>)}
              </tr>
            ))}
          </tbody>
        </table>
      </div>
    </section>
  );
}

const Pointer = () => <path d="M8 5v10l2.300-2.200L12 16l1.600-.8-1.600-3.200h3z" fill="#fff" stroke="#222" />;

function StatusBar() {
  return (
    <footer className="flex h-6 shrink-0 items-center bg-[#f4f4f4] text-xs text-[#333]">
      <div className="flex flex-1 items-center">
        <p className="flex-1 pl-0.5">按一下以選取、按 Tab 交替、按 Ctrl 加入、按 Shift 除選。</p>
        <button aria-label="工作集" className="mr-[201px]">
          <Icon w={16} h={16}>
            <circle cx="3" cy="2.500" r="2.200" fill="#4a90d0" /><path d="M.5 4.500h5V13h-5z" fill="#5a9fdc" /><circle cx="10.500" cy="2.500" r="2.200" fill="#d9642c" /><path d="M8 4.500h5V11H8z" fill="#d97b4a" />
            <circle cx="7" cy="6.500" r="2.300" fill="#35a853" /><path d="M4.300 8.500h5.400V16H4.300z" fill="#46b565" /><path d="M10 14l5-5" stroke="#2f78d0" strokeWidth="2.200" />
          </Icon>
        </button>
      </div>
      <Chevron color="#b5b5b5" />
      <button className="ml-[13px] flex items-center text-[#999]">
        <Icon w={15} h={16}><path d="M7.500.7h6.800v4h-3l-1.800 2v-2h-2zM3 7.500h3.500v3H3zM.7 14.500l1.500-3.500h5.500l1.500 3.500z" stroke="#999" strokeWidth="1.200" /></Icon>
        <span className="ml-px">:0</span>
      </button>
      <button aria-label="設計選項" className="ml-6">
        <Icon w={16} h={16}><path d="M.7.7h14.600v14.600H.7z" fill="#fff" stroke="#444" strokeWidth="1.300" /><path d="M0 0h16v3.500H0z" fill="#555" /><path d="M3 6h2M6.500 6H13M3 8.500h2M6.500 8.500H13M3 11h2M6.500 11H13M3 13h2M6.500 13H13" stroke="#444" /></Icon>
      </button>
      <button aria-label="加入至選項" className="ml-[10px]">
        <Icon w={16} h={16}><path d="M2.700 9V.7h12.600v11.600H8" fill="#f8f8f8" stroke="#999" strokeWidth="1.200" /><path d="M2 0h14v3H2z" fill="#aaa" /><path d="M5 5.500h2M8 5.500h5M5 8h2M8 8h5M8 10.500h5M0 13h6" stroke="#999" /><path d="M5 10l4 3-4 3z" fill="#999" /></Icon>
      </button>
      <label className="relative ml-[11px] flex w-[199px] items-center">
        <select aria-label="作用中設計選項" className="w-full appearance-none bg-transparent"><option>主要模型</option></select>
        <Chevron className="pointer-events-none absolute right-0" />
      </label>
      <label className="ml-[11px] flex items-center gap-[3px]">
        <input type="checkbox" defaultChecked className="peer sr-only" />
        <Icon w={12} h={12}><path d="M0 0h12v12H0z" fill="#666" /><path d="M2.500 6l2.500 2.500L9.500 3.500" stroke="#fff" strokeWidth="1.600" /></Icon>
        排除選項
      </label>
      <div className="ml-[92px] flex items-center gap-[10px]">
        <button aria-label="選取連結"><Icon w={16} h={16}><path d="M1 3.500a2 2 0 012-2h3.500a2 2 0 010 4H3a2 2 0 01-2-2zM8 3a2 2 0 012-1.500h3a2 2 0 010 4" stroke="#e8792b" strokeWidth="1.300" /><Pointer /></Icon></button>
        <button aria-label="選取參考底圖"><Icon w={17} h={16}><path d="M4 1h11l-3 4H1zM4 6h9l-3 4H1z" fill="#3f9bdc" /><Pointer /></Icon></button>
        <button aria-label="選取鎖點元素"><Icon w={16} h={16}><path d="M3 1h7M4.500 1v5L2 8.500h9L8.500 6V1M6.500 9v6" stroke="#555" strokeWidth="1.200" /><Pointer /></Icon></button>
        <button aria-label="依面選取元素"><Icon w={17} h={16}><path d="M3 3l6-3v11l-6 4z" fill="#3f9bdc" stroke="#2a78b8" /><Pointer /></Icon></button>
        <button aria-label="選取時拖曳"><Icon w={16} h={16}><path d="M0 8h11M5.500 2v12M2 6L0 8l2 2M3.500 4l2-2 2 2" stroke="#333" strokeWidth="1.300" /><path d="M10 0l5 5.500M15 0l-5 5.500" stroke="#e02020" strokeWidth="1.800" /><Pointer /></Icon></button>
        <button aria-label="背景程序"><Icon w={16} h={16}><circle cx="8" cy="8" r="6" stroke="#bbb" strokeWidth="3" strokeDasharray="2.700 2" /></Icon></button>
        <button className="flex items-center"><Icon w={16} h={16}><path d="M.7.7h14.600L10 7.500v7.800L6.500 12V7.500z" fill="#eee" stroke="#444" strokeWidth="1.300" /></Icon><span className="ml-0.5">:0</span></button>
      </div>
      <span className="w-[60px]" />
    </footer>
  );
}

export default function App() {
  return (
    <div className="flex h-screen flex-col overflow-hidden bg-[#f5f5f5] [font-family:'Open_Sans','Noto_Sans_CJK_TC',sans-serif]">
      <TitleBar />
      <RibbonTabs />
      <Ribbon />
      <main className="flex min-h-0 flex-1 border-t-2 border-[#c0c0c0]">
        <aside className="mb-0.5 flex w-[375px] shrink-0 flex-col bg-[#f0f0f0]">
          <Properties />
          <ProjectBrowser />
        </aside>
        <span className="w-0.5 shrink-0 bg-[#c0c0c0]" />
        <LegendView />
        <span className="w-0.5 shrink-0 bg-[#c0c0c0]" />
        <ScheduleView />
      </main>
      <StatusBar />
    </div>
  );
}
